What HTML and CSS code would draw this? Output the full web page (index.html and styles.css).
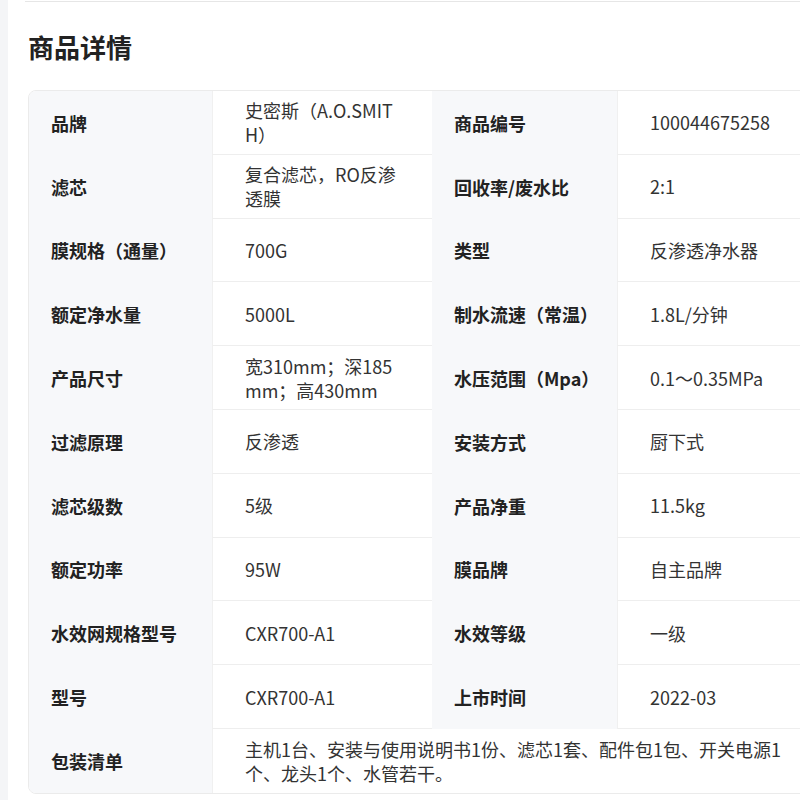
FILE: index.html
```html
<!DOCTYPE html>
<html lang="zh-CN">
<head>
<meta charset="utf-8">
<title>商品详情</title>
<link rel="stylesheet" href="styles.css">
</head>
<body>
<div class="page">
  <div class="divider"></div>
  <section class="detail">
    <h2 class="title">商品详情</h2>
    <div class="spec">
      <div class="label">品牌</div><div class="value">史密斯（A.O.SMITH）</div><div class="label">商品编号</div><div class="value">100044675258</div>
      <div class="label">滤芯</div><div class="value">复合滤芯，RO反渗透膜</div><div class="label">回收率/废水比</div><div class="value">2:1</div>
      <div class="label">膜规格（通量）</div><div class="value">700G</div><div class="label">类型</div><div class="value">反渗透净水器</div>
      <div class="label">额定净水量</div><div class="value">5000L</div><div class="label">制水流速（常温）</div><div class="value">1.8L/分钟</div>
      <div class="label">产品尺寸</div><div class="value">宽310mm；深185mm；高430mm</div><div class="label">水压范围（Mpa）</div><div class="value">0.1～0.35MPa</div>
      <div class="label">过滤原理</div><div class="value">反渗透</div><div class="label">安装方式</div><div class="value">厨下式</div>
      <div class="label">滤芯级数</div><div class="value">5级</div><div class="label">产品净重</div><div class="value">11.5kg</div>
      <div class="label">额定功率</div><div class="value">95W</div><div class="label">膜品牌</div><div class="value">自主品牌</div>
      <div class="label">水效网规格型号</div><div class="value">CXR700-A1</div><div class="label">水效等级</div><div class="value">一级</div>
      <div class="label">型号</div><div class="value">CXR700-A1</div><div class="label">上市时间</div><div class="value">2022-03</div>
      <div class="label last">包装清单</div><div class="value wide last">主机1台、安装与使用说明书1份、滤芯1套、配件包1包、开关电源1个、龙头1个、水管若干。</div>
    </div>
  </section>
</div>
</body>
</html>
```
FILE: styles.css
```css
html, body {
  margin: 0;
  padding: 0;
  overflow: hidden;
}
body {
  background: #f4f5f7;
  font-family: "Noto Sans CJK SC", "Noto Sans", sans-serif;
  color: #333;
}
.page {
  margin-left: 8px;
  background: #fff;
  min-height: 800px;
  overflow: hidden;
}
.divider {
  margin-left: 17px;
  height: 1px;
  margin-top: 1px;
  background: #e6e6e6;
}
.detail {
  padding-left: 20px;
}
.title {
  margin: 27px 0 0 0;
  font-size: 26px;
  line-height: 36px;
  font-weight: 700;
  color: #222;
}
.spec {
  margin-top: 25px;
  width: 795px;
  display: grid;
  grid-template-columns: 183px 220px 185px 206px;
  grid-auto-rows: 63.8px;
  border: 1px solid #ebebeb;
  border-radius: 8px;
  overflow: hidden;
  box-sizing: border-box;
}
.label {
  background: #f7f8fa;
  display: flex;
  align-items: center;
  padding-left: 22px;
  font-size: 18px;
  font-weight: 700;
  color: #222;
  box-sizing: border-box;
}
.value {
  display: flex;
  align-items: center;
  padding: 0 34px 0 32px;
  font-size: 18px;
  line-height: 24px;
  color: #333;
  border-bottom: 1px solid #eeeeee;
  border-left: 1px solid #f0f0f0;
  word-break: break-all;
  box-sizing: border-box;
}
.value.wide {
  grid-column: span 3;
}
.value.last {
  border-bottom: none;
}
```
